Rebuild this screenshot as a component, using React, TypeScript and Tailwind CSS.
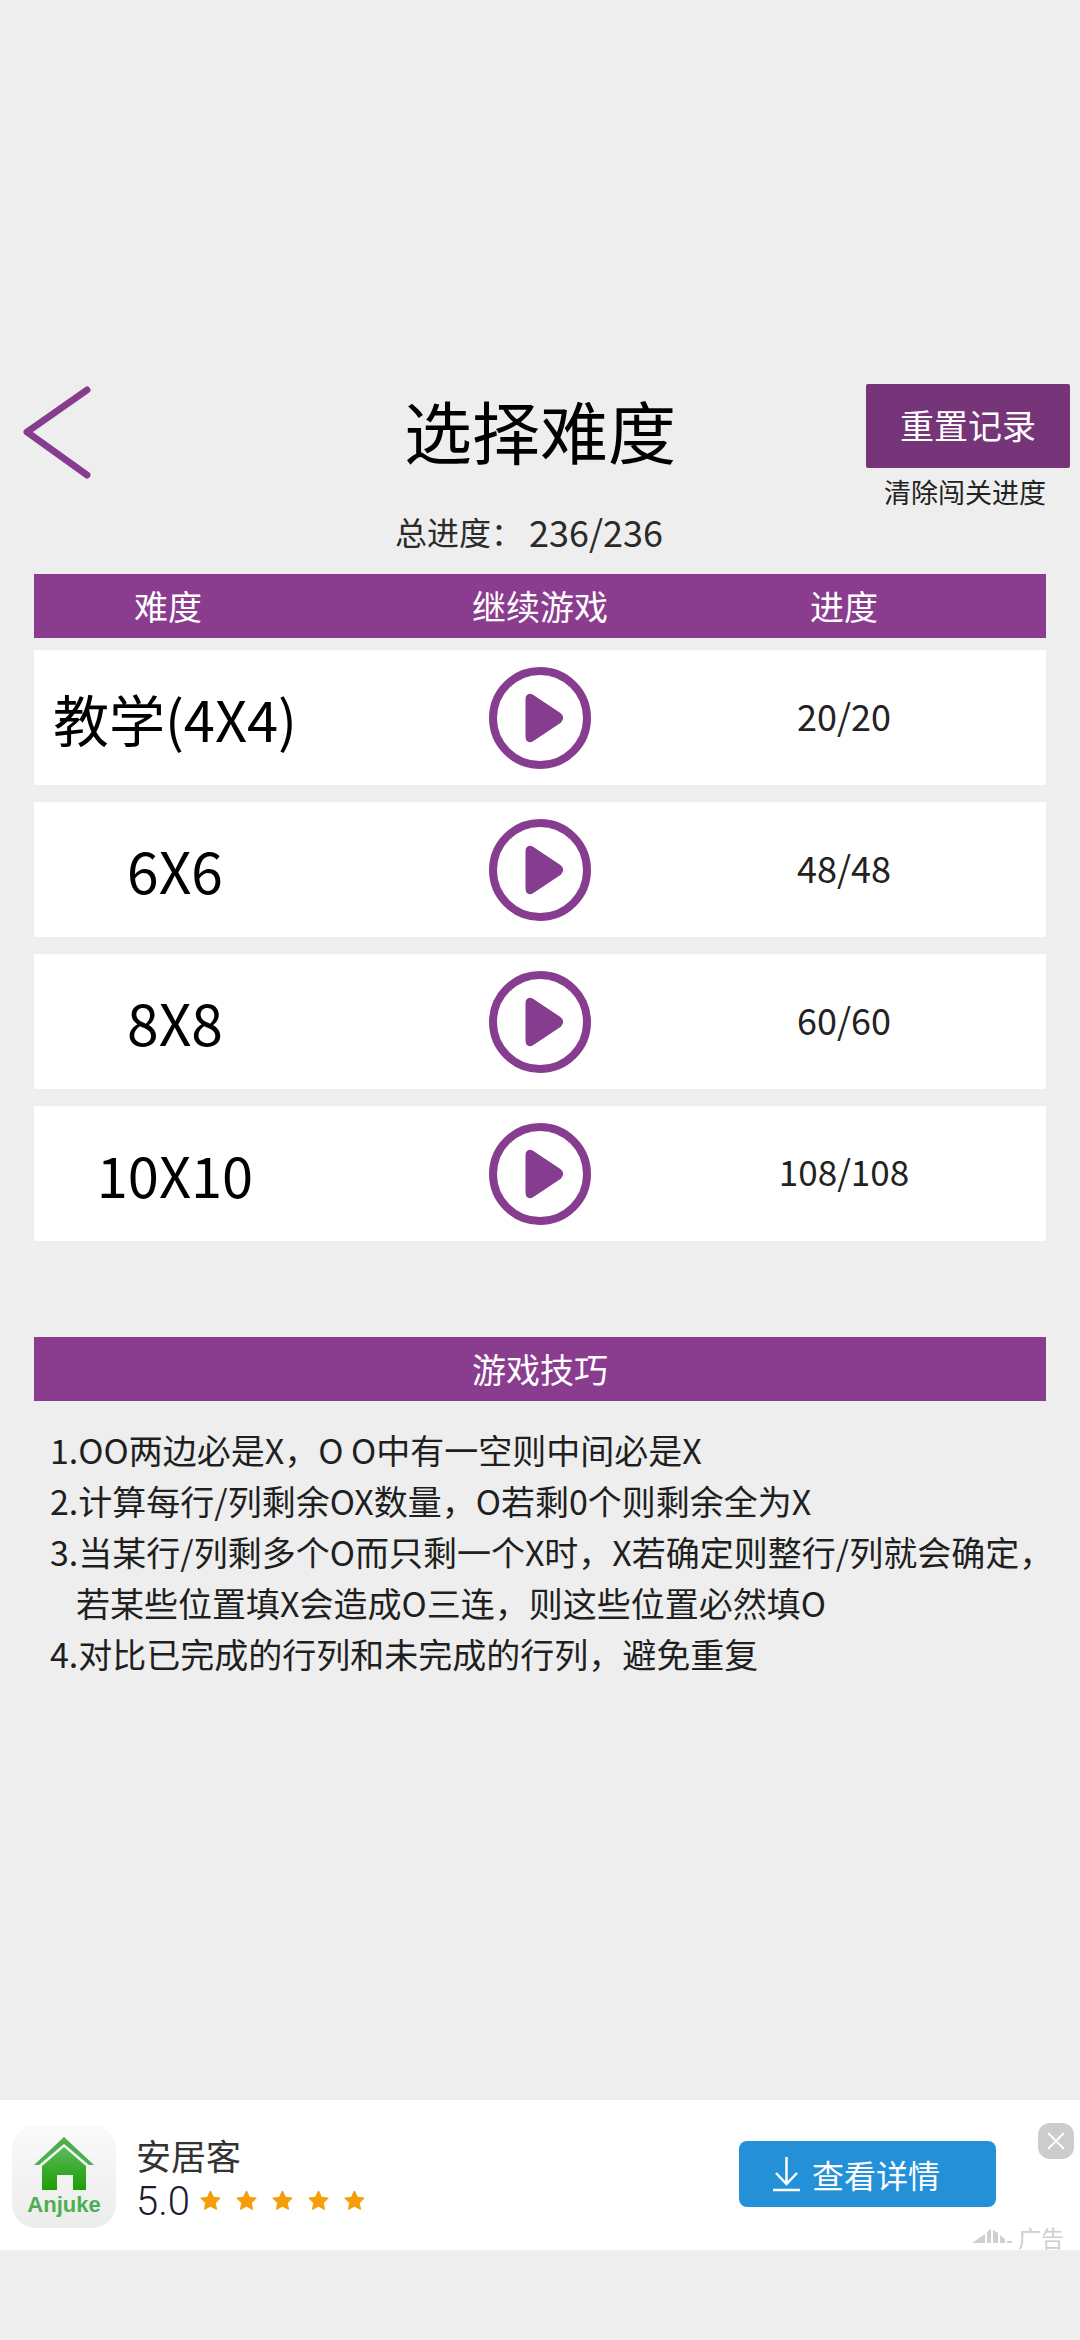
const font = "font-['Noto_Sans_CJK_SC','Noto_Sans',sans-serif]";

function Play() {
  return (
    <svg width="102" height="102" viewBox="0 0 102 102">
      <circle cx="51" cy="51" r="47" fill="none" stroke="#863c8f" strokeWidth="8" />
      <path d="M39 32 Q39 28 43 30 L70 48 Q73 51 70 54 L43 72 Q39 74 39 70 Z" fill="#863c8f" stroke="#863c8f" strokeWidth="5" strokeLinejoin="round" />
    </svg>
  );
}

function Row({ label, progress, size }: { label: string; progress: string; size: string }) {
  return (
    <div className="grid h-[135px] grid-cols-[282px_448px_160px] items-center bg-white">
      <div className={`whitespace-nowrap text-center text-black ${size}`}>{label}</div>
      <div className="flex justify-center">
        <Play />
      </div>
      <div className={`pb-[5px] text-center text-[#222222] ${progress.length > 5 ? "text-[35px]" : "text-[36px]"}`}>{progress}</div>
    </div>
  );
}

function Star() {
  return (
    <svg width="21" height="21" viewBox="0 0 24 24">
      <path d="M12 1.5 L15.2 8.4 L22.8 9.3 L17.2 14.5 L18.7 22 L12 18.3 L5.3 22 L6.8 14.5 L1.2 9.3 L8.8 8.4 Z" fill="#f59e0b" stroke="#f59e0b" strokeWidth="1.5" strokeLinejoin="round" />
    </svg>
  );
}

export default function App() {
  return (
    <div className={`min-h-[2340px] w-[1080px] overflow-hidden bg-[#eeeeee] pt-[384px] ${font}`}>
      <div className="flex h-[122px] items-start">
        <div className="w-[214px] pl-[20px]">
          <svg width="76" height="96" viewBox="0 0 76 96">
            <path d="M67 6 L7 48 L67 91" fill="none" stroke="#863c8f" strokeWidth="7" strokeLinecap="round" strokeLinejoin="round" />
          </svg>
        </div>
        <div className="flex-1 pt-[6px] text-center text-[68px] leading-[80px] text-black">选择难度</div>
        <div className="flex w-[214px] flex-col items-center pr-[10px]">
          <div className="flex h-[84px] w-[204px] items-center justify-center rounded-[2px] bg-[#753578] pb-[4px] text-[34px] text-white">重置记录</div>
          <div className="mr-[6px] mt-[6px] text-[27px] leading-[36px] text-[#222222]">清除闯关进度</div>
        </div>
      </div>
      <div className="flex h-[68px] items-start justify-center pr-[22px] pt-[1px] text-[32px] leading-[48px] text-[#2a2a2a]">
        <span className="mr-[6px]">总进度：</span>
        <span className="text-[36px]">236/236</span>
      </div>
      <div className="mx-[34px]">
        <div className="grid h-[64px] grid-cols-[282px_448px_160px] items-center bg-[#8a3c8e] pb-[2px] text-center text-[34px] text-white">
          <div className="pr-[14px]">难度</div>
          <div>继续游戏</div>
          <div>进度</div>
        </div>
        <div className="mt-[12px] flex flex-col gap-[17px]">
          <Row label="教学(4X4)" progress="20/20" size="text-[56px]" />
          <Row label="6X6" progress="48/48" size="text-[57px]" />
          <Row label="8X8" progress="60/60" size="text-[57px]" />
          <Row label="10X10" progress="108/108" size="text-[56px]" />
        </div>
        <div className="mt-[96px] flex h-[64px] items-center justify-center bg-[#8a3c8e] pb-[2px] text-[34px] text-white">游戏技巧</div>
        <div className="mt-[23px] pl-[16px] text-[34px] leading-[51px] text-[#1f1f1f]">
          <div>1.OO两边必是X，O O中有一空则中间必是X</div>
          <div>2.计算每行/列剩余OX数量，O若剩0个则剩余全为X</div>
          <div className="whitespace-nowrap">3.当某行/列剩多个O而只剩一个X时，X若确定则整行/列就会确定，</div>
          <div className="pl-[26px]">若某些位置填X会造成O三连，则这些位置必然填O</div>
          <div>4.对比已完成的行列和未完成的行列，避免重复</div>
        </div>
      </div>
      <div className="relative mt-[421px] flex h-[150px] bg-white">
        <div className="ml-[12px] mt-[25px] flex h-[103px] w-[104px] flex-col items-center rounded-[24px] bg-gradient-to-b from-[#fafafa] to-[#ececec]">
          <svg className="mt-[11px]" width="62" height="54" viewBox="0 0 62 54">
            <defs>
              <linearGradient id="h" x1="0" y1="0" x2="0" y2="1">
                <stop offset="0" stopColor="#5cb85c" />
                <stop offset="1" stopColor="#1d9e04" />
              </linearGradient>
            </defs>
            <path d="M1 29 L31 1 L61 29 L56 29 L31 8 L6 29 Z" fill="#4caf50" />
            <path d="M9 30 L31 11 L53 30 L53 54 L40 54 L40 39 L24 39 L24 54 L9 54 Z" fill="url(#h)" />
          </svg>
          <div className="mt-[3px] font-['Liberation_Sans',sans-serif] text-[22px] font-bold leading-[24px] text-[#4caf50]">Anjuke</div>
        </div>
        <div className="ml-[20px] mt-[33px]">
          <div className="text-[35px] leading-[44px] text-[#333333]">安居客</div>
          <div className="flex items-center leading-[46px]">
            <span className="relative top-[2px] font-['Roboto',sans-serif] text-[40px] font-light text-[#1a1a2e]">5.0</span>
            <span className="ml-[10px] flex gap-[15px]">
              <Star />
              <Star />
              <Star />
              <Star />
              <Star />
            </span>
          </div>
        </div>
        <div className="absolute left-[739px] top-[41px] flex h-[66px] w-[257px] items-center rounded-[8px] bg-[#2490d8] pl-[34px] text-[32px] text-white">
          <svg className="mr-[12px]" width="27" height="36" viewBox="0 0 27 36">
            <path d="M13.5 1 V28 M3 17 L13.5 28 L24 17 M0 34 H27" fill="none" stroke="white" strokeWidth="2.5" />
          </svg>
          查看详情
        </div>
        <div className="absolute left-[1038px] top-[23px] flex h-[36px] w-[36px] items-center justify-center rounded-[12px] bg-[#cccccc]">
          <svg width="20" height="20" viewBox="0 0 20 20">
            <path d="M2 2 L18 18 M18 2 L2 18" stroke="white" strokeWidth="1.8" />
          </svg>
        </div>
        <div className="absolute left-[972px] top-[125px] flex items-center whitespace-nowrap text-[23px] leading-[24px] text-[#cfcfcf]">
          <svg className="mr-[6px]" width="40" height="16" viewBox="0 0 40 16">
            <path d="M0 14 L13 5 L13 14 Z M15 3 L19 0 L19 14 L15 14 Z M21 1 L26 4 L26 14 L21 14 Z M28 6 L33 10 L33 14 L28 14 Z M35 12 L40 12 L40 14 L35 14 Z" fill="#cfcfcf" />
          </svg>
          广告
        </div>
      </div>
    </div>
  );
}
